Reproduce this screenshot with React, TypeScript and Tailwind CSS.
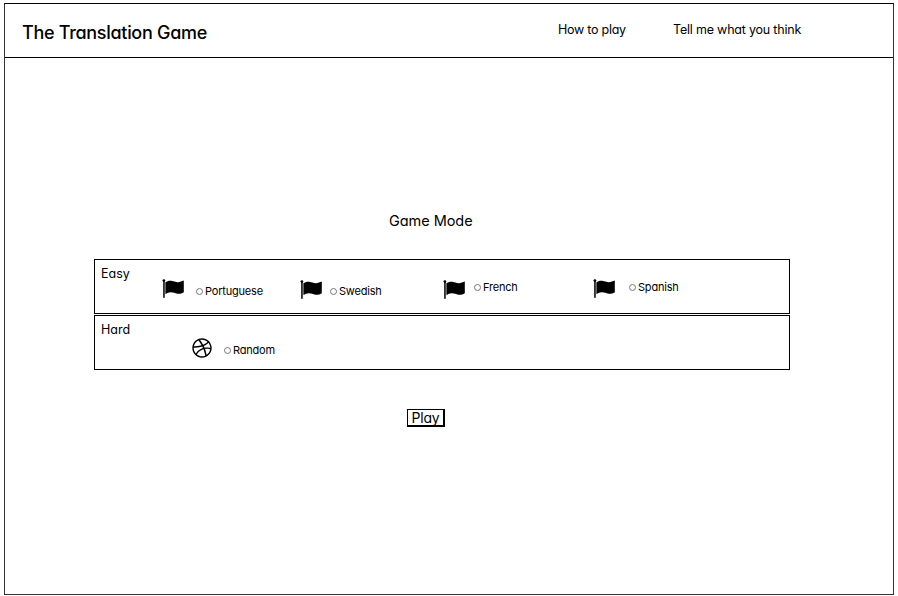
import { FaDribbble } from "react-icons/fa";

function Flag({ className }: { className: string }) {
  return (
    <svg viewBox="0 0 22 19" className={`h-[19px] w-[22px] shrink-0 ${className}`} fill="black">
      <circle cx="1.9" cy="1.6" r="1.4" />
      <rect x="1.2" y="1" width="1.5" height="17.8" />
      <path d="M3.4 3.3C5.1 2.1 7 1.5 9.2 1.8C12 2.2 13.5 3.3 16 3.2C18 3.1 19.8 2.3 21.8 1.6V13.2C19.8 14.4 17.6 15 15.4 14.7C12.8 14.3 11.3 13.2 8.7 13.3C6.6 13.4 5.1 14.2 3.4 15.1Z" />
    </svg>
  );
}

function Option({ label, className }: { label: string; className: string }) {
  return (
    <label className={`flex h-[14px] shrink-0 items-center whitespace-nowrap text-[11px] leading-[14px] tracking-[-0.2px] ${className}`}>
      <span className="mr-[2px] h-[7px] w-[7px] rounded-full border border-[#777]" />
      <span>{label}</span>
    </label>
  );
}

export default function App() {
  return (
    <div className="h-[596px] w-[898px] bg-white pl-1 pt-[3px] font-['Inter',sans-serif] text-black [font-feature-settings:'cv11']">
      <div className="flex h-[592px] w-[890px] flex-col border border-[#333] border-t-black">
        <header className="flex h-[54px] shrink-0 border-b border-black">
          <h1 className="ml-[17px] mt-[17px] w-[536px] text-[18px] font-medium leading-6 tracking-[-0.3px]">The Translation Game</h1>
          <a className="mt-[16px] w-[115px] text-[12.5px] leading-5 tracking-[-0.25px]">How to play</a>
          <a className="mt-[16px] whitespace-nowrap text-[12.5px] leading-5 tracking-[-0.2px]">Tell me what you think</a>
        </header>
        <main className="flex flex-col pl-[89px]">
          <h2 className="ml-[295px] mt-[153px] text-[14.5px] leading-5 tracking-[-0.05px]">Game Mode</h2>
          <section className="mt-[28px] flex h-[55px] w-[696px] border border-black">
            <h3 className="ml-[6px] mt-[6px] w-[61px] shrink-0 text-[12.5px] leading-4">Easy</h3>
            <Flag className="mt-[19px]" />
            <Option label="Portuguese" className="ml-[12px] mt-[24px] w-[104px]" />
            <Flag className="mt-[20px]" />
            <Option label="Swedish" className="ml-[8px] mt-[24px] w-[113px]" />
            <Flag className="mt-[20px]" />
            <Option label="French" className="ml-[9px] mt-[20px] w-[119px]" />
            <Flag className="mt-[19px]" />
            <Option label="Spanish" className="ml-[14px] mt-[20px]" />
          </section>
          <section className="mt-px flex h-[55px] w-[696px] border border-black">
            <h3 className="ml-[6px] mt-[6px] w-[91px] shrink-0 text-[12.5px] leading-4">Hard</h3>
            <FaDribbble className="mt-[22px] h-[20px] w-[20px] shrink-0" />
            <Option label="Random" className="ml-[12px] mt-[27px]" />
          </section>
          <button className="ml-[313px] mt-[39px] h-[18px] w-[38px] border border-b-2 border-r-2 border-black text-[14px] leading-[15px] tracking-[-0.2px]">
            Play
          </button>
        </main>
      </div>
    </div>
  );
}
